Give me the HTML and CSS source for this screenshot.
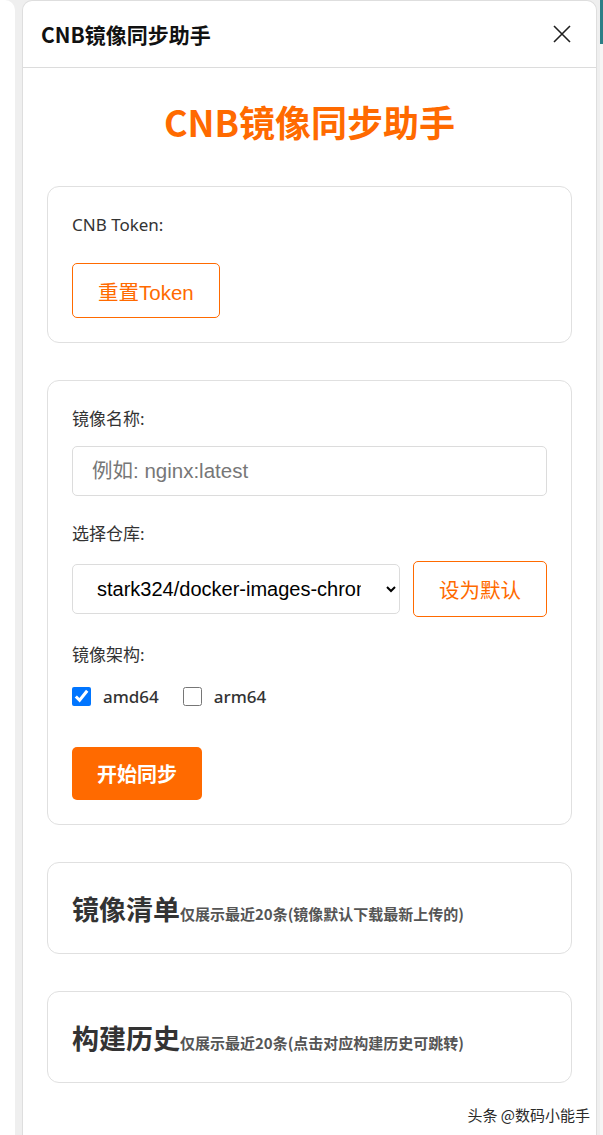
FILE: index.html
```html
<!DOCTYPE html>
<html lang="zh-CN">
<head>
  <meta charset="UTF-8">
  <title>CNB镜像同步助手</title>
  <meta name="viewport" content="width=device-width, initial-scale=1.0">
  <link rel="stylesheet" href="styles.css">
</head>
<body>
  <div class="desk">
    <div class="side-stub"></div>

    <div class="panel">
      <header class="panel-head">
        <div class="panel-title">CNB镜像同步助手</div>
        <button class="close-btn" aria-label="关闭">
          <svg width="20" height="20" viewBox="0 0 20 20"><path d="M2 2 L18 18 M18 2 L2 18" stroke="#1f1f1f" stroke-width="1.6" fill="none"/></svg>
        </button>
      </header>

      <main class="panel-body">
        <h1 class="app-title">CNB镜像同步助手</h1>

        <section class="card">
          <label class="field-label">CNB Token:</label>
          <button class="btn-outline">重置Token</button>
        </section>

        <section class="card">
          <div class="form-group">
            <label class="field-label" for="image">镜像名称:</label>
            <input id="image" class="text-input" type="text" placeholder="例如: nginx:latest">
          </div>
          <div class="form-group">
            <label class="field-label" for="repo">选择仓库:</label>
            <div class="repo-row">
              <select id="repo" class="repo-select">
                <option>stark324/docker-images-chrome</option>
              </select>
              <button class="btn-outline">设为默认</button>
            </div>
          </div>
          <div class="form-group">
            <label class="field-label">镜像架构:</label>
            <div class="arch-row">
              <label class="check"><input type="checkbox" checked> amd64</label>
              <label class="check"><input type="checkbox"> arm64</label>
            </div>
          </div>
          <button class="btn-primary">开始同步</button>
        </section>

        <section class="card list-card">
          <h2 class="list-title">镜像清单<small>仅展示最近20条(镜像默认下载最新上传的)</small></h2>
        </section>

        <section class="card list-card">
          <h2 class="list-title">构建历史<small>仅展示最近20条(点击对应构建历史可跳转)</small></h2>
        </section>
      </main>
    </div>

    <div class="side-strip"></div>
  </div>

  <div class="watermark">头条 @数码小能手</div>
</body>
</html>
```

FILE: styles.css
```css
*{box-sizing:border-box;margin:0;padding:0}
html,body{height:100%}
body{
  background:#efefef;
  font-family:"Noto Sans","Noto Sans CJK SC",sans-serif;
  color:#333;
  overflow:hidden;
}
.desk{display:flex;height:100vh}
.side-stub{
  width:15px;margin-right:7px;
  background:#fff;border-top-right-radius:10px;
}
.side-strip{
  width:3px;margin-left:3px;
  background:linear-gradient(#2b7f86 0,#2b7f86 44px,#f6f6f6 44px,#f6f6f6 100%);
}

.panel{
  width:575px;
  background:#fff;
  border:1px solid #dedede;border-bottom:none;
  border-radius:10px 10px 0 0;
}
.panel-head{
  display:flex;justify-content:space-between;align-items:center;
  height:67px;padding:0 24px 0 18px;
  border-bottom:1px solid #dcdcdc;
}
.panel-title{
  font-family:"Noto Sans CJK SC",sans-serif;
  font-size:21px;font-weight:700;color:#111;
}
.close-btn{
  display:flex;border:none;background:none;cursor:pointer;
}

.panel-body{padding:28px 24px 0 24px}
.app-title{
  font-family:"Noto Sans CJK SC",sans-serif;
  font-size:36px;line-height:50px;font-weight:700;
  color:#ff6a00;text-align:center;
  margin-bottom:40px;
}

.card{
  border:1px solid #e0e0e0;border-radius:12px;
  padding:26px 24px 24px;
  margin-bottom:37px;
}
.field-label{
  display:block;
  font-size:17px;line-height:24px;font-weight:400;color:#333;
  margin-bottom:15px;
}
.card > .field-label:first-child{margin-bottom:26px}
.form-group{margin-bottom:26px}

.btn-outline{
  height:55px;padding:0 25px;
  background:#fff;color:#ff6a00;
  border:1px solid #ff6a00;border-radius:5px;
  font-family:"Liberation Sans","Noto Sans CJK SC",sans-serif;
  font-size:20.5px;cursor:pointer;
}
.text-input{
  display:block;width:100%;height:50px;
  padding:0 19px;
  border:1px solid #dcdcdc;border-radius:5px;
  font-family:"Liberation Sans","Noto Sans CJK SC",sans-serif;
  font-size:20.5px;color:#222;
}
.text-input::placeholder{color:#777}

.repo-row{display:flex;align-items:center;gap:13px}
.repo-select{
  flex:1;min-width:0;height:50px;
  padding:0 22px 0 20px;
  border:1px solid #dcdcdc;border-radius:5px;
  background:#fff;color:#000;
  font-family:"Liberation Sans","Noto Sans CJK SC",sans-serif;
  font-size:20px;
}
.repo-row .btn-outline{height:56px;padding:0 25px}

.arch-row{display:flex;align-items:center;height:28px}
.check{
  display:inline-flex;align-items:center;gap:12px;
  margin-right:24px;
  font-size:17px;font-weight:500;color:#333;
}
.check input{width:19px;height:19px;margin:0}

.btn-primary{
  margin-top:11px;
  height:53px;padding:0 25px;
  background:#ff6a00;color:#fff;
  border:none;border-radius:5px;
  font-family:"Noto Sans CJK SC",sans-serif;
  font-size:20px;font-weight:700;cursor:pointer;
}

.list-title{
  font-family:"Noto Sans CJK SC",sans-serif;
  font-size:27px;line-height:40px;font-weight:700;color:#333;
}
.list-title small{
  font-size:15px;line-height:1;font-weight:700;color:#555;
}

.watermark{
  position:absolute;right:13px;bottom:10px;
  font-family:"Noto Sans CJK SC",sans-serif;
  font-size:15px;color:#2a2a2a;
  text-shadow:0 0 2px #fff,0 0 2px #fff;
}
```
